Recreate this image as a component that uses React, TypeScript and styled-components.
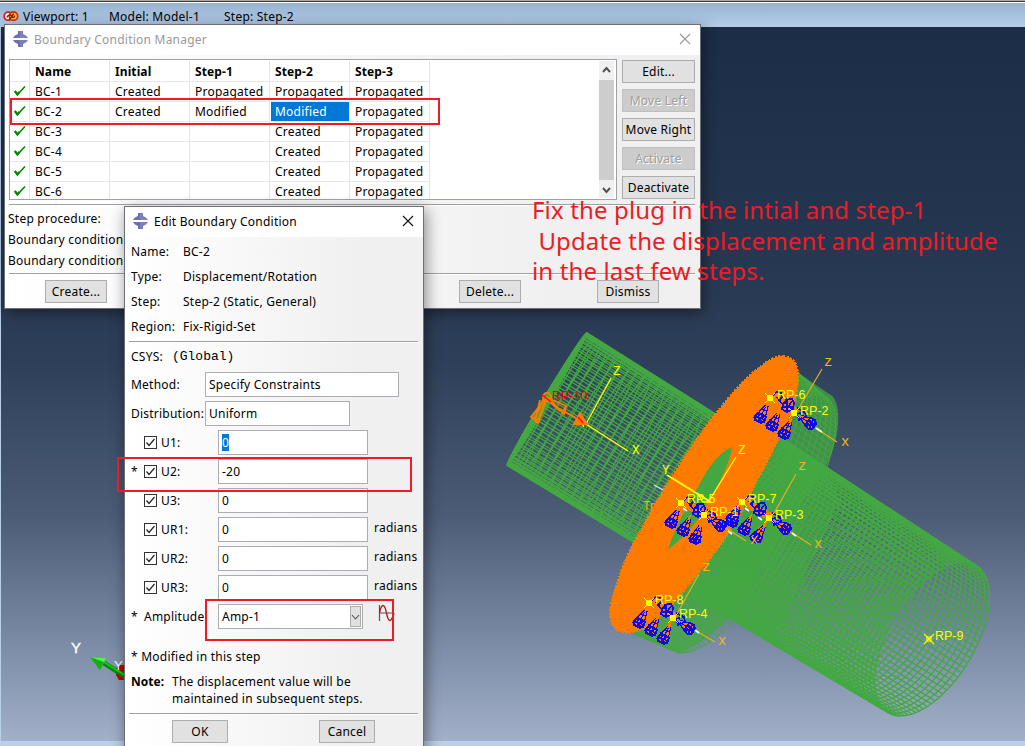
import React from 'react';
import styled, { createGlobalStyle, css } from 'styled-components';

const GlobalStyle = createGlobalStyle`
  * { box-sizing: border-box; }
  body { margin: 0; overflow: hidden; font-family: "Noto Sans", "Open Sans", sans-serif; font-size: 12px; letter-spacing: 0.23px; color: #000; }
`;

/* ---------- shell ---------- */
const Screen = styled.div`
  position: relative; width: 1025px; height: 746px; overflow: hidden;
  display: flex; flex-direction: column; background: #b8d0ea;
`;
const TopEdge = styled.div`height: 3px; background: linear-gradient(#a8a8a8 0 1px, #3c3c3c 1px 2px, #fff 2px);`;
const ViewportBar = styled.header`
  height: 24px; display: flex; align-items: center; padding: 3px 0 0 3px; line-height: 18px;
  background: linear-gradient(#98b3d2, #b4cde8);
  span { white-space: pre; }
`;
const BarText = styled.span<{ $w: number }>`width: ${p => p.$w}px;`;
const Canvas = styled.main`
  height: 714px; margin-left: 1px;
  background: linear-gradient(#1b2d47 0, #24364f 28%, #2e4059 47%, #4b5b75 68%, #7585a0 84%, #a2b0c8 100%);
`;
const Scene = styled.svg`position: absolute; left: 0; top: 0; pointer-events: none; letter-spacing: 0;`;

/* ---------- windows ---------- */
const Window = styled.section<{ $x: number; $y: number; $w: number; $h: number }>`
  position: absolute; left: ${p => p.$x}px; top: ${p => p.$y}px; width: ${p => p.$w}px; height: ${p => p.$h}px;
  display: flex; flex-direction: column; border: 1px solid #6a6f78;
  background: linear-gradient(90deg, #fff, #f0f0f0 80%); box-shadow: 2px 4px 14px rgba(0, 0, 0, 0.45);
`;
const TitleBar = styled.div<{ $muted?: boolean }>`
  height: 30px; flex: none; background: #fff; display: flex; align-items: center; padding: 0 9px 2px 8px; gap: 6px;
  color: ${p => (p.$muted ? '#999' : '#000')};
  > span { flex: 1; }
`;
const Rule = styled.hr<{ $top: number; $right?: number }>`
  border: 0; height: 2px; flex: none; margin: ${p => p.$top}px ${p => p.$right ?? 5}px 0 4px;
  background: linear-gradient(#a0a0a0 50%, #fff 50%);
`;
const Button = styled.button<{ $w: number }>`
  width: ${p => p.$w}px; height: 23px; flex: none; padding: 0; border: 1px solid #adadad; background: #e1e1e1;
  font: inherit; letter-spacing: inherit; line-height: 20px; color: #000; white-space: nowrap;
  &:disabled { color: #a0a0a0; background: #ccc; border-color: #bfbfbf; text-shadow: 1px 1px #fff; }
`;

/* ---------- manager ---------- */
const ManagerBody = styled.div`display: flex; gap: 5px; padding: 4px 0 0 4px;`;
const TableBox = styled.div`
  width: 608px; height: 141px; border: 1px solid #a0a0a8; background: #fff; display: flex; overflow: hidden;
  justify-content: space-between;
`;
const Grid = styled.div`width: 421px; display: grid; grid-template-columns: 20px repeat(5, 80px); grid-template-rows: 21px; grid-auto-rows: 20px; padding-top: 1px;`;
const Cell = styled.div<{ $head?: boolean; $selected?: boolean }>`
  padding-left: 5px; line-height: ${p => (p.$head ? 21 : 20)}px; white-space: nowrap;
  border-right: 1px solid #e3e3e3; border-bottom: 1px solid #e8e8e8;
  ${p => p.$head && css`font-weight: 700; letter-spacing: 0.1px;`}
  ${p => p.$selected && css`background: #0078d7; color: #fff; margin-left: 1px; padding-left: 4px;`}
`;
const TickCell = styled(Cell)`padding-left: 4px; padding-top: 3px; svg { display: block; }`;
const ScrollTrack = styled.div`
  width: 15px; margin: 1px 2px 1px 0; background: #f0f0f0; display: flex; flex-direction: column; align-items: center; justify-content: space-between;
  i { width: 15px; height: 100px; background: #cdcdcd; }
`;
const Stack = styled.div`display: flex; flex-direction: column; gap: 6px; padding-top: 1px;`;
const InfoLines = styled.div`padding: 2px 0 0 3px; line-height: 21px; height: 67px;`;
const ManagerFooter = styled.div`display: flex; justify-content: space-between; padding: 5px 41px 0 40px;`;
const FooterPair = styled.div`display: flex; gap: 76px;`;

/* ---------- editor ---------- */
const Facts = styled.dl`
  margin: 0; padding: 2px 0 0 6px; display: grid; grid-template-columns: 52px 1fr; grid-auto-rows: 25px; line-height: 25px;
  dt, dd { margin: 0; white-space: nowrap; }
`;
const FormRow = styled.div<{ $h?: number }>`height: ${p => p.$h ?? 29}px; flex: none; display: flex; align-items: center; padding-left: 6px; white-space: nowrap;`;
const Label = styled.span<{ $w: number }>`width: ${p => p.$w}px; flex: none;`;
const Mono = styled.span`font-family: "Liberation Mono", monospace; font-size: 13px; letter-spacing: 0; margin-left: 9px;`;
const Field = styled.div<{ $w: number }>`
  width: ${p => p.$w}px; height: 25px; flex: none; border: 1px solid #abadb3; background: #fff; padding: 0 1px 0 3px; line-height: 22px;
  display: flex; align-items: center; justify-content: space-between;
`;
const Marked = styled.span`background: #0078d7; color: #fff; line-height: 17px;`;
const Check = styled.span`width: 13px; height: 13px; border: 1px solid #333; background: #fff; margin-right: 4px; flex: none; svg { display: block; }`;
const Unit = styled.span`margin: -4px 0 0 6px;`;
const DropArrow = styled.span`width: 11px; height: 21px; border: 1px solid #adadad; background: #e1e1e1; display: grid; place-items: center;`;
const Note = styled.div`
  display: grid; grid-template-columns: 41px 1fr; padding: 0 0 0 6px; line-height: 17px;
  p { margin: 0; white-space: pre; }
  b { letter-spacing: 0; }
`;
const EditorFooter = styled.div`display: flex; gap: 91px; padding: 5px 0 0 47px;`;

/* ---------- annotations ---------- */
const RedFrame = styled.div<{ $x: number; $y: number; $w: number; $h: number }>`
  position: absolute; left: ${p => p.$x}px; top: ${p => p.$y}px; width: ${p => p.$w}px; height: ${p => p.$h}px; border: 2px solid #ed1c24;
`;
const RedNote = styled.p`
  position: absolute; left: 532px; top: 195px; margin: 0; white-space: pre; color: #ed1c24; font-size: 24px; letter-spacing: 0.14px; line-height: 30.6px;
`;

const BoltIcon = () => (
  <svg width="15" height="16" viewBox="0 0 15 16">
    <path d="M5 0h5v3l3 1.500 2 2.500H0l2-2.500L5 3zM0 9h15l-2 2.500L10 13v3H5v-3l-3-1.500z" fill="#7f7fba" />
    <path d="M5 0h2v7H0l2-2.500L5 3zM0 9h7v7H5v-3l-3-1.500z" fill="#5f5f9c" opacity=".45" />
  </svg>
);
const CloseIcon = ({ color }: { color: string }) => (
  <svg width="12" height="12" viewBox="0 0 12 12"><path d="M1 1l10 10M11 1L1 11" stroke={color} strokeWidth="1.1" /></svg>
);
const Tick = () => (
  <svg width="12" height="12" viewBox="0 0 12 12"><path d="M1 6.2l2.4 3.3L11 1.5" fill="none" stroke="#008a00" strokeWidth="1.6" /><path d="M.8 6l2.600 3.500 2-2.500" fill="none" stroke="#008a00" strokeWidth="2.2" /></svg>
);
const Chevron = ({ up, thin }: { up?: boolean; thin?: boolean }) => (
  <svg width="9" height="17" viewBox="0 0 9 17"><path d={up ? 'M1 11l3.5-4L8 11' : 'M1 7l3.5 4L8 7'} fill="none" stroke="#505050" strokeWidth={thin ? 1.1 : 1.9} /></svg>
);
const LinkIcon = () => (
  <svg width="17" height="13" viewBox="0 0 17 13" style={{ marginRight: 3 }}>
    <circle cx="5.2" cy="6.2" r="4" fill="#fff" stroke="#c8201a" strokeWidth="1.8" />
    <circle cx="10.500" cy="6.2" r="4.200" fill="#ffd21a" stroke="#d03018" strokeWidth="1.8" />
    <path d="M4 7.500c1-3 4-3 5-1s2 1 3-1M6 9c3 0 2-4 5-5" fill="none" stroke="#a01010" strokeWidth="1.5" />
  </svg>
);
const WaveIcon = () => (
  <svg width="17" height="18" viewBox="0 0 17 18" style={{ marginLeft: 15, marginTop: -7 }}>
    <path d="M1.5 1v16M1 9h15" stroke="#555" strokeWidth="1.2" />
    <path d="M1.500 9C3.500 -1 6.500 -1 8.500 9S13 19 16 9" fill="none" stroke="#b0202a" strokeWidth="1.4" />
  </svg>
);

/* ---------- mesh geometry ---------- */
type P = [number, number];
const AX: P = [0.853, 0.522];
const UP: P = [0.515, -0.857];
const ringPoint = (c: P, a: number, b: number, t: number): P => [
  c[0] + UP[0] * a * Math.cos(t) + AX[0] * b * Math.sin(t),
  c[1] + UP[1] * a * Math.cos(t) + AX[1] * b * Math.sin(t),
];
const f = (p: P) => `${p[0].toFixed(1)} ${p[1].toFixed(1)}`;
const ring = (c: P, a: number, b: number) => {
  let d = '';
  for (let i = 0; i <= 48; i++) d += (i ? 'L' : 'M') + f(ringPoint(c, a, b, (i / 48) * Math.PI * 2));
  return d;
};
const mix = (a: number, b: number, t: number) => a + (b - a) * t;
interface Tube { c0: P; c1: P; a0: number; a1: number; b0: number; b1: number; rings: number; lines: number; }
const tube = ({ c0, c1, a0, a1, b0, b1, rings, lines }: Tube) => {
  let d = '';
  for (let i = 0; i <= rings; i++) {
    const t = i / rings;
    d += ring([mix(c0[0], c1[0], t), mix(c0[1], c1[1], t)], mix(a0, a1, t), mix(b0, b1, t));
  }
  for (let i = 0; i < lines; i++) {
    const t = ((i + 0.3) / lines) * Math.PI * 2;
    d += 'M' + f(ringPoint(c0, a0, b0, t)) + 'L' + f(ringPoint(c1, a1, b1, t));
  }
  return d;
};
const smallPipe = tube({ c0: [547, 399], c1: [705, 497], a0: 77.500, a1: 76, b0: 3, b1: 17, rings: 22, lines: 66 });
const bigPipe = tube({ c0: [735, 516], c1: [932, 639], a0: 91, a1: 86, b0: 24, b1: 43, rings: 44, lines: 92 });
const rim = tube({ c0: [712, 500], c1: [750, 524], a0: 155, a1: 148, b0: 38, b1: 46, rings: 8, lines: 120 });

const GREEN = '#44a842';
const ORANGE = '#ff7b00';
const BLUE = '#0a0af0';

const Cone = ({ x, y, tx, ty }: { x: number; y: number; tx: number; ty: number }) => {
  const len = Math.hypot(tx - x, ty - y);
  const ang = (Math.atan2(ty - y, tx - x) * 180) / Math.PI;
  return (
    <g transform={`translate(${x} ${y}) rotate(${ang})`}>
      <path d={`M3 0L${len - 4} -5V5z`} fill={ORANGE} />
      <path d={`M${len - 14} -2L${len - 5} -4M${len - 14} 1L${len - 4} 4M${len - 12} 0h8M${len - 9} -3v6`} fill="none" stroke={BLUE} strokeWidth="1.1" />
      <path d={`M${len - 5} -5.500L${len + 2} -6.500L${len + 5} -3V4L${len + 2} 6.500L${len - 5} 5z`} fill={BLUE} />
      <path d={`M${len - 3} -4l2 1M${len - 3} 0l2 1M${len - 2} 3l2 1M${len + 1} -4v2M${len + 2} 1v2`} stroke={ORANGE} strokeWidth="1" />
    </g>
  );
};
const Cross = ({ x, y, color = '#ff0' }: { x: number; y: number; color?: string }) => (
  <g fill="none" stroke={color}>
    <path d={`M${x - 5} ${y - 5}l10 10m0 -10l-10 10`} strokeWidth="1.1" />
    <path d={`M${x - 2} ${y - 2}h4v4h-4z`} strokeWidth="1.2" />
  </g>
);
const Constraint = ({ x, y, dx = 24, dy = 15 }: { x: number; y: number; dx?: number; dy?: number }) => (
  <g>
    <path d={`M${x + 3} ${y}l${dx} ${dy}`} stroke={ORANGE} strokeWidth="8" />
    <path
      d={`M${x + 3} ${y - 3}l4 -3 4 1 1 4 -4 4M${x + 7} ${y - 1}l5 7M${x + 13} ${y + 6}l4 -5h5l2 4 -1 6 -6 3 -5 -3zM${x + 14} ${y + 4}l9 8M${x + 22} ${y + 3}l-7 11M${x + 17} ${y + 1}v12M${x + 12} ${y + 9}h12`}
      fill="none" stroke={BLUE} strokeWidth="1.7"
    />
    <Cone x={x} y={y} tx={x - 10} ty={y + 20} />
    <Cone x={x + 11} y={y + 9} tx={x + 2} ty={y + 28} />
    <Cone x={x + dx} y={y + dy} tx={x + 14} ty={y + 36} />
    <Cone x={x + dx} y={y + dy} tx={x + dx + 17} ty={y + dy + 11} />
    <path d={`M${x + dx + 3} ${y + dy - 5}l8 4 1 5 -7 3 -2 -6 9 -3`} stroke={BLUE} strokeWidth="1.6" fill="none" />
    <Cross x={x} y={y} />
    <Cross x={x + dx} y={y + dy} />
  </g>
);

const SceneText = styled.text<{ $mono?: boolean; $size?: number }>`
  font-family: ${p => (p.$mono ? '"Liberation Mono", monospace' : '"Liberation Sans", sans-serif')};
  font-size: ${p => p.$size ?? 12.500}px;
`;
const pointLabels: [string, number, number][] = [
  ['RP-6', 777, 399], ['RP-2', 800, 415], ['RP-7', 748, 503], ['RP-3', 775, 519], ['RP-5', 687, 503],
  ['RP-1', 710, 516], ['RP-8', 655, 604], ['RP-4', 679, 618], ['RP-9', 935, 640],
];
const axisLabels: [string, number, number][] = [
  ['z', 824, 366], ['x', 841, 446], ['z', 798, 470], ['x', 814, 548], ['x', 750, 544], ['z', 702, 571], ['x', 718, 645],
];
const mainAxes: [string, number, number][] = [['Z', 613, 375], ['X', 632, 454], ['Y', 662, 474], ['Z', 738, 454]];

const Model = () => (
  <Scene width="1025" height="746" viewBox="0 0 1025 746">
    <path d={smallPipe} fill="none" stroke={GREEN} strokeWidth="1.25" />
    <path d={ring([547, 399], 77.500, 3.500)} fill={GREEN} stroke={GREEN} />
    <path d="M797 372L832 396C842 405 840 440 826 466L728 618C708 638 685 655 672 651L636 630L700 480z" fill={GREEN} opacity=".75" />
    <path d={rim} fill="none" stroke={GREEN} strokeWidth="1" />
    <path d="M784 439L822 464L840 500L775 640L728 618L660 590z" fill={GREEN} opacity=".6" />
    <path d={bigPipe} fill="none" stroke={GREEN} strokeWidth="1.35" />
    <path d="M783 356C792 356 798 363 798 376C798 399 788 424 777 442L752 491C739 518 724 543 704 566C683 592 660 622 640 630C630 634 619 634 613 626C607 615 611 600 617 584C623 563 632 545 642 528C656 500 685 454 713 417C730 395 748 375 760 367C768 360 776 356 783 356z"
      fill={ORANGE} stroke={ORANGE} strokeWidth="2" strokeDasharray="2 1.500" shapeRendering="crispEdges" />
    <path d="M732 447C720 451 707 469 698 487C685 508 673 533 668 550C680 540 700 522 707 503C720 484 730 462 732 447z" fill={GREEN} />
    <g fill="none" stroke="#ff0" strokeWidth="1.3">
      <path d="M586 424L611 378M586 424L628 451M709 501L736 457" />
      <path d="M667 475L709 501" strokeWidth="2" />
      <path d="M697 493l14 9h-8zM580 420l4 7" />
    </g>
    <path d="M799 408L822 369M794 414L837 442M773 515L796 474M769 518L811 545M720 524L746 541M678 612L699 574M673 617L715 642" stroke="#e2b01c" strokeWidth="1.2" fill="none" />
    <path d="M654 485l9 5" stroke="#dcdce8" strokeWidth="1.3" />
    <SceneText x="643" y="510" fill="#f0b010" $size={12}>Tr</SceneText>
    <g shapeRendering="crispEdges">
      <Constraint x={770} y={398} />
      <Constraint x={681} y={503} dx={23} dy={12} />
      <Constraint x={742} y={502} dx={27} dy={16} />
      <Constraint x={649} y={603} />
      <Cone x={738} y={506} tx={732} ty={519} />
    </g>
    <path d="M816 428l6 4M792 533l4 3M728 531l4 3M695 630l4 3M745 508l4 3M758 517l4 3M683 508l4 3" stroke="#fff" strokeWidth="1.600" />
    <Cross x={929} y={639} />
    <g fill="none" stroke={ORANGE} strokeWidth="1.800">
      <path d="M547 397L531 417L538 423zM544 399L534 420M540 400L535 421M545 402L538 421M531 417l9 4" />
      <path d="M547 397L564 414L566 406zM549 401L560 411M566 406l-4 8" />
      <circle cx="547" cy="397" r="4" />
      <path d="M560 409L576 418" />
      <path d="M580 413L574 424L587 424z" fill={ORANGE} />
    </g>
    <path d="M541 394l10 8M578 417l5 6" stroke="red" strokeWidth="1.2" />
    <SceneText x="552" y="400" fill="#f00000">RP-10</SceneText>
    <g fill="#ff0">{pointLabels.map(([t, x, y]) => <SceneText key={t} x={x} y={y}>{t}</SceneText>)}</g>
    <g fill="#f4b816">{axisLabels.map(([t, x, y], i) => <SceneText key={i} $mono $size={14} x={x} y={y}>{t}</SceneText>)}</g>
    <g fill="#ff0">{mainAxes.map(([t, x, y], i) => <SceneText key={i} $mono x={x} y={y}>{t}</SceneText>)}</g>
    <path d="M116 668l4 -3h5v15h-6l-3 -5z" fill="#c00000" />
    <path d="M104 663L126 677" stroke="#008a00" strokeWidth="5" />
    <path d="M104 662L126 676" stroke="#1cc81c" strokeWidth="2" />
    <path d="M90 657L106 658L100 670z" fill="#10b010" />
    <path d="M90 657L106 658L104 662z" fill="#55ee55" />
    <SceneText x="71" y="653" fill="#fff" stroke="#fff" strokeWidth=".4" $size={15}>Y</SceneText>
    <SceneText x="114" y="670" fill="#fff" $size={13}>Y</SceneText>
  </Scene>
);

const rows = [
  ['BC-1', 'Created', 'Propagated', 'Propagated', 'Propagated'],
  ['BC-2', 'Created', 'Modified', 'Modified', 'Propagated'],
  ['BC-3', '', '', 'Created', 'Propagated'],
  ['BC-4', '', '', 'Created', 'Propagated'],
  ['BC-5', '', '', 'Created', 'Propagated'],
  ['BC-6', '', '', 'Created', 'Propagated'],
];
const dofs = [
  { name: 'U1', value: '0', marked: true },
  { name: 'U2', value: '-20', changed: true },
  { name: 'U3', value: '0' },
  { name: 'UR1', value: '0', unit: true },
  { name: 'UR2', value: '0', unit: true },
  { name: 'UR3', value: '0', unit: true },
];

const Manager = () => (
  <Window $x={4} $y={24} $w={697} $h={285}>
    <TitleBar $muted><BoltIcon /><span>Boundary Condition Manager</span><CloseIcon color="#999" /></TitleBar>
    <ManagerBody>
      <TableBox>
        <Grid>
          <Cell $head />
          {['Name', 'Initial', 'Step-1', 'Step-2', 'Step-3'].map(h => <Cell $head key={h}>{h}</Cell>)}
          {rows.map((r, i) => (
            <React.Fragment key={r[0]}>
              <TickCell><Tick /></TickCell>
              {r.map((v, j) => <Cell key={j} $selected={i === 1 && j === 3}>{v}</Cell>)}
            </React.Fragment>
          ))}
        </Grid>
        <ScrollTrack><Chevron up /><i /><Chevron /></ScrollTrack>
      </TableBox>
      <Stack>
        <Button $w={73}>Edit...</Button>
        <Button $w={73} disabled>Move Left</Button>
        <Button $w={73}>Move Right</Button>
        <Button $w={73} disabled>Activate</Button>
        <Button $w={73}>Deactivate</Button>
      </Stack>
    </ManagerBody>
    <Rule $top={4} />
    <InfoLines>
      <div>Step procedure:</div>
      <div>Boundary condition</div>
      <div>Boundary condition</div>
    </InfoLines>
    <Rule $top={0} />
    <ManagerFooter>
      <Button $w={62}>Create...</Button>
      <FooterPair><Button $w={62}>Delete...</Button><Button $w={62}>Dismiss</Button></FooterPair>
    </ManagerFooter>
  </Window>
);

const Editor = () => (
  <Window $x={124} $y={206} $w={300} $h={560}>
    <TitleBar><BoltIcon /><span>Edit Boundary Condition</span><CloseIcon color="#111" /></TitleBar>
    <Facts>
      <dt>Name:</dt><dd>BC-2</dd>
      <dt>Type:</dt><dd>Displacement/Rotation</dd>
      <dt>Step:</dt><dd>Step-2 (Static, General)</dd>
      <dt>Region:</dt><dd>Fix-Rigid-Set</dd>
    </Facts>
    <Rule $top={2} />
    <FormRow $h={27}><span>CSYS:</span><Mono>(Global)</Mono></FormRow>
    <FormRow><Label $w={74}>Method:</Label><Field $w={194}>Specify Constraints</Field></FormRow>
    <FormRow><Label $w={74}>Distribution:</Label><Field $w={145}>Uniform</Field></FormRow>
    {dofs.map(d => (
      <FormRow key={d.name}>
        <Label $w={13}>{d.changed ? '*' : ''}</Label>
        <Check><svg width="11" height="11" viewBox="0 0 11 11"><path d="M1.500 5.500l2.500 3L9.500 2" fill="none" stroke="#222" strokeWidth="1.2" /></svg></Check>
        <Label $w={57}>{d.name}:</Label>
        <Field $w={150}>{d.marked ? <Marked>{d.value}</Marked> : d.value}</Field>
        {d.unit && <Unit>radians</Unit>}
      </FormRow>
    ))}
    <FormRow>
      <Label $w={13}>*</Label><Label $w={74}>Amplitude:</Label>
      <Field $w={145}>Amp-1<DropArrow><Chevron thin /></DropArrow></Field>
      <WaveIcon />
    </FormRow>
    <FormRow $h={42}><span style={{ paddingTop: 9 }}>* Modified in this step</span></FormRow>
    <Note><b>Note:</b><p>{'The displacement value will be\nmaintained in subsequent steps.'}</p></Note>
    <Rule $top={6} />
    <EditorFooter><Button $w={56}>OK</Button><Button $w={56}>Cancel</Button></EditorFooter>
  </Window>
);

export default function App() {
  return (
    <Screen>
      <GlobalStyle />
      <TopEdge />
      <ViewportBar>
        <LinkIcon />
        <BarText $w={86}>Viewport: 1</BarText><BarText $w={115}>Model: Model-1</BarText><BarText $w={90}>Step: Step-2</BarText>
      </ViewportBar>
      <Canvas />
      <Model />
      <Manager />
      <Editor />
      <RedFrame $x={10} $y={98} $w={430} $h={27} />
      <RedFrame $x={117} $y={457} $w={295} $h={35} />
      <RedFrame $x={205} $y={599} $w={189} $h={42} />
      <RedNote>{'Fix the plug in the intial and step-1\n Update the displacement and amplitude\nin the last few steps.'}</RedNote>
    </Screen>
  );
}
